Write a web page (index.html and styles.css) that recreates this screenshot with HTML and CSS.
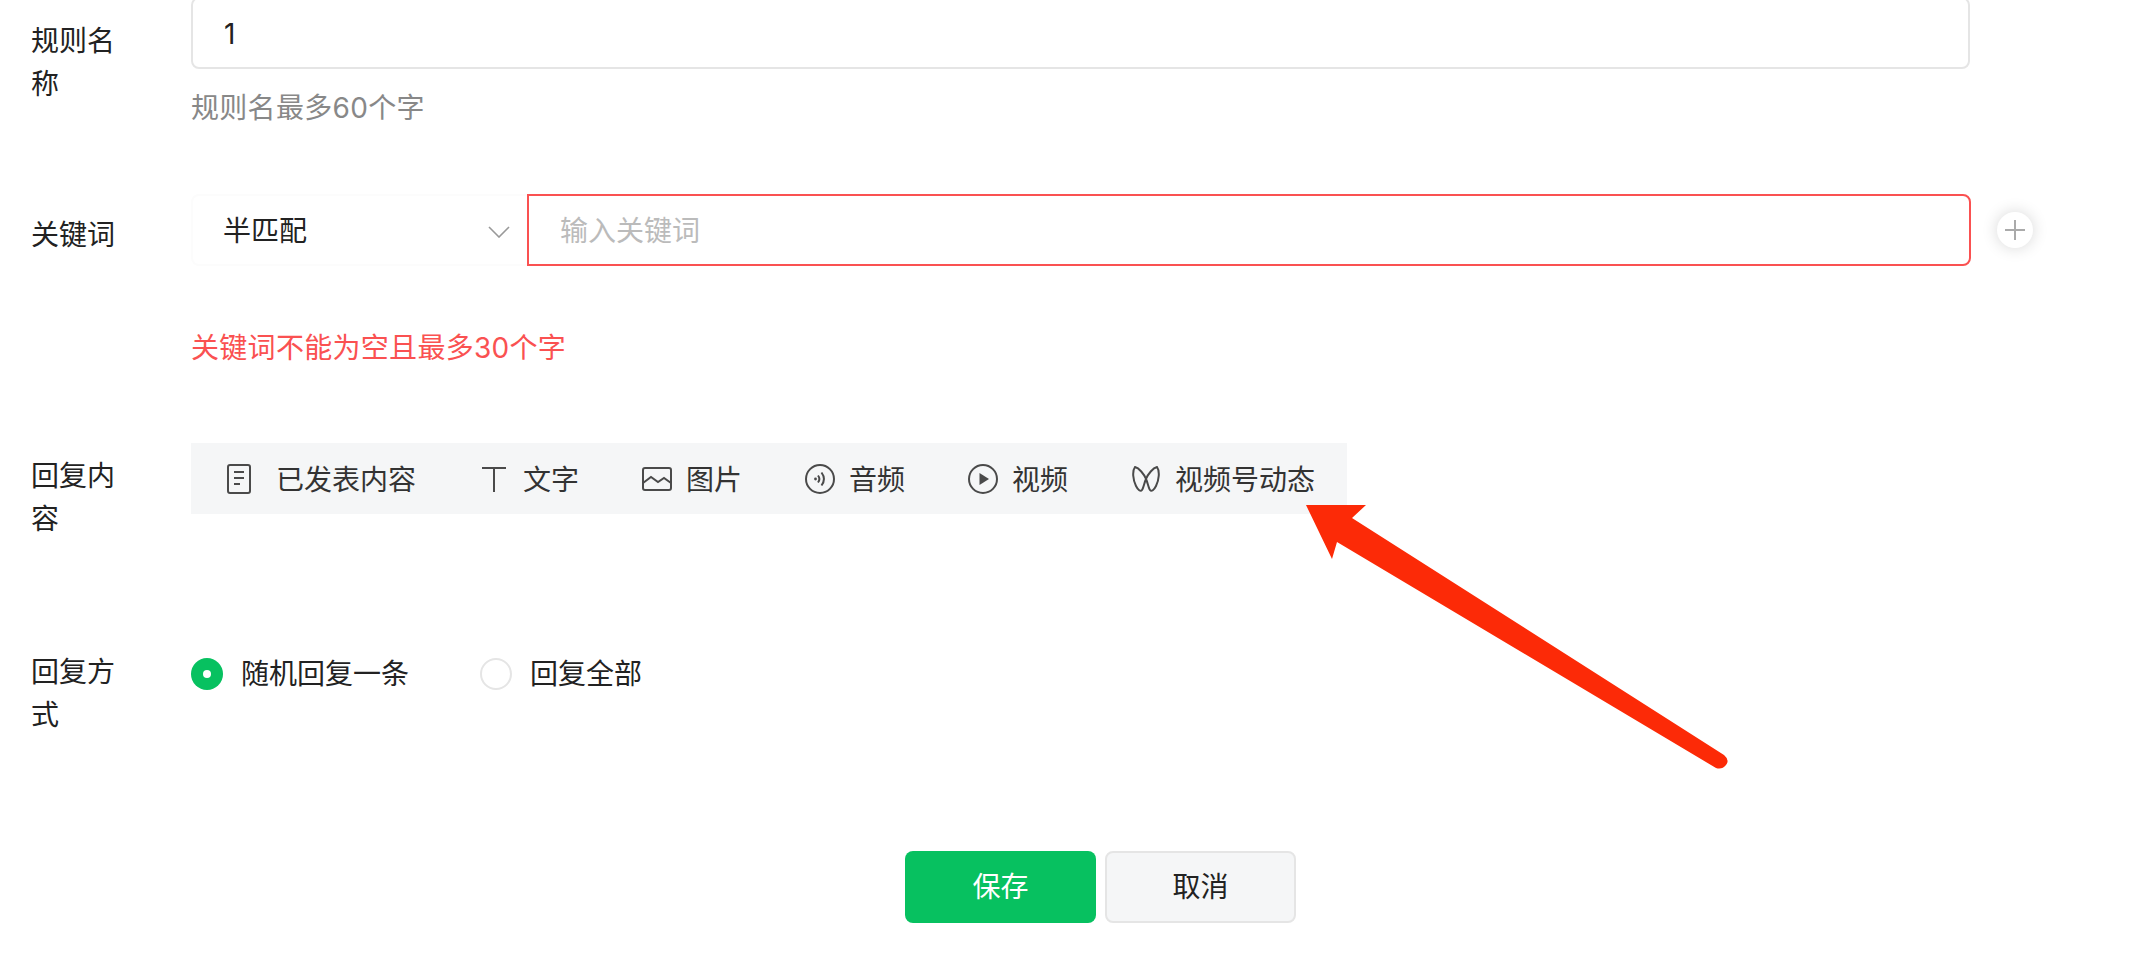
FILE: index.html
```html
<!DOCTYPE html>
<html lang="zh-CN">
<head>
    <meta charset="UTF-8">
    <meta name="viewport" content="width=device-width, initial-scale=1.0">
    <title>关键词回复规则</title>
    <link rel="stylesheet" href="styles.css">
</head>
<body>
    <form class="rule-form">
        <div class="form-row">
            <label class="form-label" for="rule-name">规则名称</label>
            <div class="form-body">
                <input type="text" id="rule-name" class="text-input name-input" value="1">
                <p class="hint">规则名最多60个字</p>
            </div>
        </div>

        <div class="form-row keyword-row">
            <label class="form-label" for="keyword">关键词</label>
            <div class="form-body">
                <div class="keyword-line">
                    <div class="match-select">
                        <span>半匹配</span>
                        <svg class="chevron" width="22" height="12" viewBox="0 0 22 12"><path d="M1 1l10 10L21 1" fill="none" stroke="#999" stroke-width="1.6"/></svg>
                    </div>
                    <input type="text" id="keyword" class="text-input keyword-input" placeholder="输入关键词">
                    <button type="button" class="add-button" aria-label="添加">
                        <svg width="20" height="20" viewBox="0 0 20 20"><path d="M0 10h20M10 0v20" stroke="#aaa" stroke-width="2"/></svg>
                    </button>
                </div>
                <p class="hint error">关键词不能为空且最多30个字</p>
            </div>
        </div>

        <div class="form-row content-row">
            <div class="form-label">回复内容</div>
            <div class="form-body">
                <div class="tool-bar">
                    <div class="tool tool-first">
                        <span class="tool-icon">
                            <svg width="24" height="30" viewBox="0 0 24 30" fill="none" stroke="#4a4a4a" stroke-width="2"><rect x="1" y="1" width="22" height="28" rx="2"/><path d="M7 8h10M7 14h10M7 20h6"/></svg>
                        </span>
                        已发表内容
                    </div>
                    <div class="tool">
                        <span class="tool-icon">
                            <svg width="24" height="26" viewBox="0 0 24 26" fill="none" stroke="#4a4a4a" stroke-width="2"><path d="M0 2h24M12 2v24"/></svg>
                        </span>
                        文字
                    </div>
                    <div class="tool">
                        <span class="tool-icon">
                            <svg width="30" height="24" viewBox="0 0 30 24" fill="none" stroke="#4a4a4a" stroke-width="2"><rect x="1" y="1" width="28" height="22" rx="2"/><path d="M1 16l8-6 7 5 6-4 7 5"/></svg>
                        </span>
                        图片
                    </div>
                    <div class="tool">
                        <span class="tool-icon">
                            <svg width="30" height="30" viewBox="0 0 30 30" fill="none" stroke="#4a4a4a" stroke-width="2"><circle cx="15" cy="15" r="14"/><path d="M13 11.5c1.6 2 1.6 5 0 7M16.5 8.5c3 4 3 9 0 13"/><circle cx="10.5" cy="15" r="1.4" fill="#4a4a4a" stroke="none"/></svg>
                        </span>
                        音频
                    </div>
                    <div class="tool">
                        <span class="tool-icon">
                            <svg width="30" height="30" viewBox="0 0 30 30" fill="none" stroke="#4a4a4a" stroke-width="2"><circle cx="15" cy="15" r="14"/><path d="M11.5 9l9.500 6-9.500 6z" fill="#4a4a4a" stroke="none"/></svg>
                        </span>
                        视频
                    </div>
                    <div class="tool">
                        <span class="tool-icon">
                            <svg width="28" height="26" viewBox="0 0 28 26" fill="none" stroke="#4a4a4a" stroke-width="2"><path d="M3 1C0 5 1 14 4 20c2 4 4.500 6 6 4 1.500-2 2.500-8 4-11 2-5 7-11 11-12 3 4 2 13-1 19-2 4-4.500 6-6 4-1.500-2-2.500-8-4-11C12 8 7 2 3 1z"/></svg>
                        </span>
                        视频号动态
                    </div>
                </div>
            </div>
        </div>

        <div class="form-row mode-row">
            <div class="form-label">回复方式</div>
            <div class="form-body radio-group">
                <div class="radio-item"><span class="radio checked"></span>随机回复一条</div>
                <div class="radio-item"><span class="radio"></span>回复全部</div>
            </div>
        </div>

        <div class="form-actions">
            <button type="button" class="btn btn-primary">保存</button>
            <button type="button" class="btn btn-default">取消</button>
        </div>
    </form>

    <svg class="arrow" width="2144" height="966" viewBox="0 0 2144 966">
        <path d="M1306 505L1366 505L1352 518L1724 755Q1730 760 1726 765Q1722 770 1716 768L1337 542L1332 559Z" fill="#fc2a07"/>
    </svg>
</body>
</html>
```

FILE: styles.css
```css
* {
    box-sizing: border-box;
}
html, body {
    height: 100%;
}
body {
    margin: 0;
    background: #fff;
    color: #222;
    font-family: Inter, "Noto Sans CJK SC", sans-serif;
    font-size: 28px;
    line-height: 42px;
    overflow: hidden;
}
.rule-form {
    width: 2144px;
}
.form-row {
    display: flex;
}
.form-label {
    width: 191px;
    padding: 20px 70px 0 31px;
    flex-shrink: 0;
    line-height: 43px;
}
.form-body {
    flex: 1;
}
.hint {
    margin: 18px 0 0;
    color: #888;
    letter-spacing: 0.3px;
}
.hint.error {
    margin-top: 61px;
    color: #fa5151;
}
.text-input {
    display: block;
    height: 72px;
    padding-top: 2px;
    border: 2px solid #e5e5e5;
    border-radius: 8px;
    background: #fff;
    color: #222;
    font: inherit;
    outline: none;
}
.text-input::placeholder {
    color: #bbb;
}
.name-input {
    width: 1779px;
    margin-top: -3px;
    padding-left: 31px;
}
.keyword-row {
    margin-top: 65px;
}
.keyword-line {
    display: flex;
    align-items: center;
}
.match-select {
    display: flex;
    align-items: center;
    justify-content: space-between;
    width: 336px;
    height: 72px;
    padding: 2px 17px 0 30px;
    border: 2px solid #fcfcfc;
    border-right: none;
    border-radius: 8px 0 0 8px;
}
.chevron {
    margin-top: 2px;
}
.keyword-input {
    width: 1444px;
    padding-left: 31px;
    border-color: #fa5151;
    border-radius: 0 8px 8px 0;
}
.add-button {
    display: flex;
    align-items: center;
    justify-content: center;
    width: 36px;
    height: 36px;
    margin-left: 26px;
    padding: 0;
    border: none;
    border-radius: 50%;
    background: #fff;
    box-shadow: 0 0 16px rgba(0, 0, 0, 0.16);
}
.content-row {
    margin-top: 74px;
}
.content-row .form-label {
    padding-top: 12px;
}
.tool-bar {
    display: inline-flex;
    gap: 62px;
    height: 71px;
    padding: 2px 32px 0 32px;
    background: #f5f6f7;
    color: #333;
    align-items: center;
}
.tool {
    display: flex;
    align-items: center;
    gap: 13px;
}
.tool-first {
    gap: 21px;
}
.tool-icon {
    display: flex;
    align-items: center;
    justify-content: center;
    width: 32px;
    height: 32px;
    margin-top: -2px;
}
.mode-row {
    margin-top: 110px;
}
.mode-row .form-label {
    padding-top: 0;
}
.radio-group {
    display: flex;
    gap: 71px;
    padding-top: 2px;
}
.radio-item {
    display: flex;
    align-items: center;
    gap: 18px;
    height: 42px;
}
.radio {
    position: relative;
    width: 32px;
    height: 32px;
    border: 2px solid #e5e5e5;
    border-radius: 50%;
}
.radio.checked {
    border: none;
    background: #07c160;
}
.radio.checked::after {
    content: "";
    position: absolute;
    top: 12px;
    left: 12px;
    width: 8px;
    height: 8px;
    border-radius: 50%;
    background: #fff;
}
.form-actions {
    display: flex;
    justify-content: center;
    gap: 9px;
    width: 1819px;
    margin: 114px 0 0 191px;
}
.btn {
    width: 191px;
    height: 72px;
    border-radius: 8px;
    font: inherit;
}
.btn-primary {
    border: none;
    background: #07c160;
    color: #fff;
}
.btn-default {
    border: 2px solid #e5e5e5;
    background: #f5f6f7;
    color: #222;
}
.arrow {
    position: absolute;
    top: 0;
    left: 0;
    pointer-events: none;
}
```
